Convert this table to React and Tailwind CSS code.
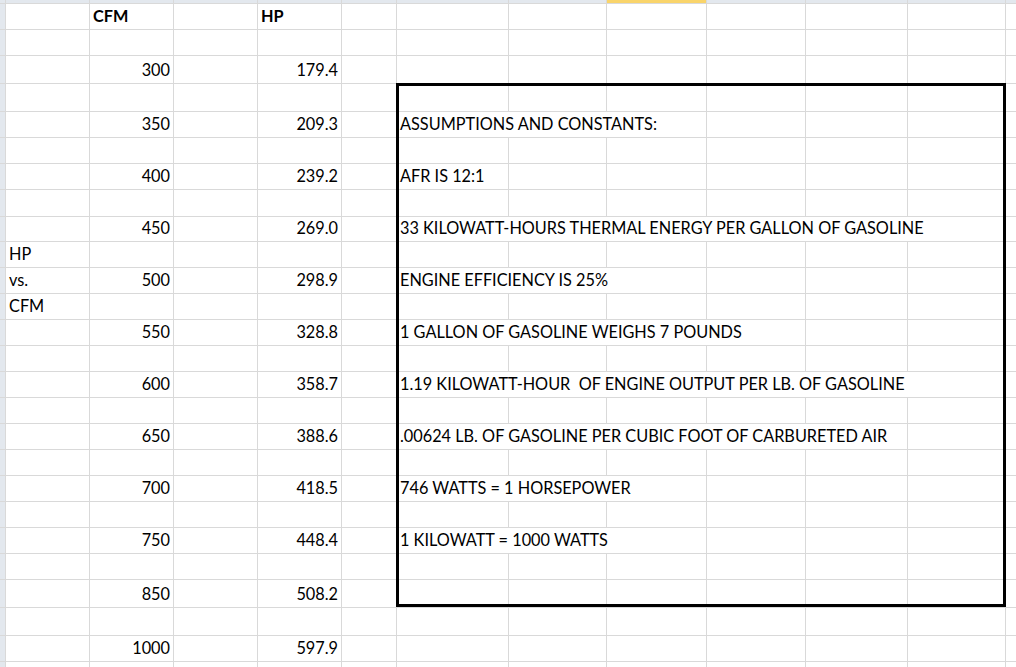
import React from "react";

// explicit placement lookups (full class names so tailwind sees them)
const ROW = [
  "row-start-1", "row-start-2", "row-start-3", "row-start-4", "row-start-5", "row-start-6",
  "row-start-7", "row-start-8", "row-start-9", "row-start-10", "row-start-11", "row-start-12",
  "row-start-13", "row-start-14", "row-start-15", "row-start-16", "row-start-17", "row-start-18",
  "row-start-19", "row-start-20", "row-start-21", "row-start-22", "row-start-23", "row-start-24",
  "row-start-25", "row-start-26", "row-start-27",
];
const COL = [
  "col-start-1", "col-start-2", "col-start-3", "col-start-4", "col-start-5", "col-start-6",
  "col-start-7", "col-start-8", "col-start-9", "col-start-10", "col-start-11", "col-start-12",
  "col-start-13",
];

const cfm = [300, 350, 400, 450, 500, 550, 600, 650, 700, 750, 850, 1000];
const hp = ["179.4", "209.3", "239.2", "269.0", "298.9", "328.8", "358.7", "388.6", "418.5", "448.4", "508.2", "597.9"];
const dataRows = [3, 5, 7, 9, 11, 13, 15, 17, 19, 21, 23, 25];

// notes inside the box: sheet row, text, grid line where the overflow stops
const notes = [
  { row: 5, text: "ASSUMPTIONS AND CONSTANTS:", end: 10, span: "col-end-10" },
  { row: 7, text: "AFR IS 12:1", end: 8, span: "col-end-8" },
  { row: 9, text: "33 KILOWATT-HOURS THERMAL ENERGY PER GALLON OF GASOLINE", end: 13, span: "col-end-13" },
  { row: 11, text: "ENGINE EFFICIENCY IS 25%", end: 10, span: "col-end-10" },
  { row: 13, text: "1 GALLON OF GASOLINE WEIGHS 7 POUNDS", end: 11, span: "col-end-11" },
  { row: 15, text: "1.19 KILOWATT-HOUR  OF ENGINE OUTPUT PER LB. OF GASOLINE", end: 13, span: "col-end-13" },
  { row: 17, text: ".00624 LB. OF GASOLINE PER CUBIC FOOT OF CARBURETED AIR", end: 12, span: "col-end-12" },
  { row: 19, text: "746 WATTS = 1 HORSEPOWER", end: 10, span: "col-end-10" },
  { row: 21, text: "1 KILOWATT = 1000 WATTS", end: 10, span: "col-end-10" },
];

const buildCells = () => {
  const cells = {};
  dataRows.forEach((r, i) => {
    cells[`${r}-3`] = { text: cfm[i], right: true };
    cells[`${r}-5`] = { text: hp[i], right: true };
  });
  cells["1-3"] = { text: "CFM", bold: true };
  cells["1-5"] = { text: "HP", bold: true };
  cells["10-2"] = { text: "HP" };
  cells["11-2"] = { text: "vs." };
  cells["12-2"] = { text: "CFM" };
  notes.forEach((n) => {
    cells[`${n.row}-7`] = { text: n.text, span: n.span, end: n.end };
  });
  return cells;
};

export default function App() {
  const cells = buildCells();
  const items = [];

  // column header strip
  for (let c = 1; c <= 13; c++) {
    items.push(
      <div
        key={`h-${c}`}
        className={`${ROW[0]} ${COL[c - 1]} ${c === 9 ? "bg-[#f9d46a]" : "bg-[#e3e8ee]"}`}
      />
    );
  }

  for (let r = 1; r <= 26; r++) {
    items.push(<div key={`rh-${r}`} className={`${ROW[r]} ${COL[0]} bg-[#e3e8ee]`} />);
    let skipUntil = 0;
    for (let c = 2; c <= 13; c++) {
      if (c < skipUntil) continue;
      const cell = cells[`${r}-${c}`];
      if (cell?.end) skipUntil = cell.end;
      items.push(
        <div
          key={`${r}-${c}`}
          className={`${ROW[r]} ${COL[c - 1]} ${cell?.span || ""} flex items-end overflow-hidden whitespace-pre bg-white pb-[5px] leading-none ${
            cell?.right ? "justify-end pr-[3px]" : "pl-[3px]"
          } ${cell?.bold ? "font-bold" : ""}`}
        >
          {cell?.text}
        </div>
      );
    }
  }

  return (
    <div className="h-[667px] w-[1016px] overflow-hidden bg-[#d9d9d9] font-['Lato',sans-serif] text-[16.3px] text-black">
      <div className="grid grid-cols-[5px_83px_83px_83px_83px_54px_111px_97px_99px_98px_101px_97px_1fr] grid-rows-[3px_25px_25px_27px_27px_25px_25px_25px_26px_24px_25px_25px_25px_25px_25px_25px_25px_25px_25px_25px_25px_25px_25px_27px_27px_25px_25px] gap-px">
        {items}
        {/* thick outline around the notes */}
        <div className="pointer-events-none row-start-5 row-end-25 col-start-7 col-end-13 -mx-px -mt-px border-[3px] border-black" />
      </div>
    </div>
  );
}
